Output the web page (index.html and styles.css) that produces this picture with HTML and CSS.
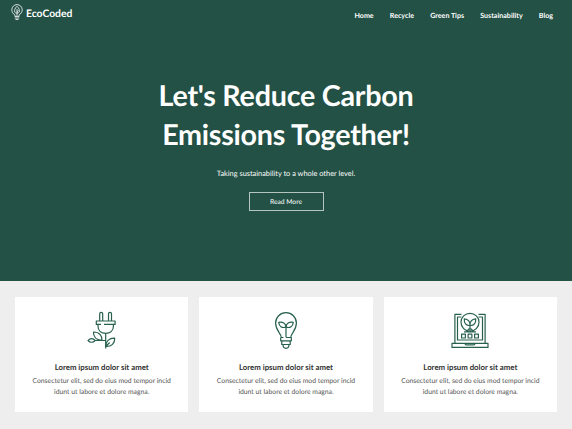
FILE: index.html
```html
<!DOCTYPE html>
<html lang="en">
<head>
<meta charset="utf-8">
<title>EcoCoded</title>
<link rel="stylesheet" href="styles.css">
</head>
<body>
<div class="top">
  <header class="bar">
    <a class="brand">
      <svg class="brand-icon" viewBox="0 0 12 17" width="12" height="17">
        <path d="M4 12.2V11C2 9.8.8 8 .8 5.8a5.2 5.2 0 0 1 10.4 0C11.2 8 10 9.8 8 11v1.2"/>
        <path d="M6 2.3C3.7 4.300 3.200 6.500 3.800 8.200 4.300 9.400 7.700 9.400 8.200 8.200 8.800 6.500 8.300 4.300 6 2.300ZM6 5v7M6 8l1.500-1.500M3.700 12.500h4.600M3.700 14h4.600M4.500 15.500h3"/>
      </svg>
      <span>EcoCoded</span>
    </a>
    <nav class="nav">
      <a>Home</a><a>Recycle</a><a>Green Tips</a><a>Sustainability</a><a>Blog</a>
    </nav>
  </header>
  <section class="hero">
    <h1>Let's Reduce Carbon<br>Emissions Together!</h1>
    <p>Taking sustainability to a whole other level.</p>
    <a class="button">Read More</a>
  </section>
</div>
<main class="cards">
  <article class="card">
    <svg class="icon" viewBox="0 0 44 50" width="44" height="50">
      <path d="M19.700 16V8.800a1.500 1.500 0 0 1 3 0V16M28.500 16V8.800a1.500 1.500 0 0 1 3 0V16"/>
      <path d="M21 19.400h-4.700V16h18.800v3.400H24M18 19.400v1.800c0 4.500 3.300 7.100 7.700 7.100s7.700-2.600 7.700-7.100v-1.800M25.700 28.300v15.100"/>
      <path d="M25.700 35.500h-10.500M22 35.500c.500-4.500-2.500-8.500-8.500-8.500-.300 4.500 2.700 8 8.500 8.500M15.200 35.500c-2.200-2.600-5.200-2.500-7.200 0 2 2.300 5 2.300 7.200 0M25.700 41.500c-.200-5 3.500-8.500 9-8.300.300 5-3.200 8.600-9 8.300l4-4"/>
    </svg>
    <h2>Lorem ipsum dolor sit amet</h2>
    <p>Consectetur elit, sed do eius mod tempor incid<br>idunt ut labore et dolore magna.</p>
  </article>
  <article class="card">
    <svg class="icon" viewBox="0 0 44 50" width="44" height="50">
      <path d="M17.200 32.300c0-4-5.600-6.400-5.600-14.200a10.400 10.400 0 0 1 20.800 0c0 7.800-5.600 10.200-5.600 14.200"/>
      <path d="M16.700 32.500h2.800M22 32.500h5.300v3.300H16.700v-3.300M17.800 36v3.500h8.400V36M19 39.800c0 4.700 6 4.700 6 0M22 32.300V20.500"/>
      <path d="M22 22c-4 1.500-7-.800-7.300-4.700 4-.800 7.300 1.200 7.300 4.700M22 22c4 1.500 7-.800 7.300-4.700-4-.800-7.300 1.200-7.300 4.700"/>
    </svg>
    <h2>Lorem ipsum dolor sit amet</h2>
    <p>Consectetur elit, sed do eius mod tempor incid<br>idunt ut labore et dolore magna.</p>
  </article>
  <article class="card">
    <svg class="icon" viewBox="0 0 44 50" width="44" height="50">
      <path d="M13.500 9.300H6.900v28.900M30.500 9.300h6.600v28.900M13.500 12H9.500v23h25V12h-4"/>
      <circle cx="22" cy="17.300" r="9"/>
      <path d="M22 26.300v-8M22 20.500c-4 .300-6-2.500-5.700-6.600 4 .300 6 2.800 5.700 6.600M22 20.500c4 .300 6-2.500 5.700-6.600-4 .300-6 2.800-5.700 6.600M19 26.800l1.500-2.800h3l1.500 2.800M16 26.800h12"/>
      <path d="M13.600 29.200h3.800v3.800h-3.800zM20.100 29.200h3.800v3.800h-3.800zM26.600 29.200h3.800v3.800h-3.800zM4 38.400h36v4H4zM16.500 38.400l1.500 1.500h8l1.500-1.500"/>
    </svg>
    <h2>Lorem ipsum dolor sit amet</h2>
    <p>Consectetur elit, sed do eius mod tempor incid<br>idunt ut labore et dolore magna.</p>
  </article>
</main>
</body>
</html>
```
FILE: styles.css
```css
* { box-sizing: border-box; }
body {
  margin: 0;
  height: 429px;
  overflow: hidden;
  background: #eee;
  font-family: Lato, sans-serif;
  text-rendering: geometricPrecision;
}
h1, h2, p { margin: 0; }
.top {
  height: 281px;
  background: #235145;
  color: #fff;
}
.bar {
  display: flex;
  justify-content: space-between;
  padding: 4px 19px 0 11px;
  height: 30px;
}
.brand {
  display: flex;
  gap: 3px;
  font-size: 10.300px;
  font-weight: 700;
  line-height: 20px;
}
.brand-icon {
  fill: none;
  stroke: #fff;
  stroke-width: .8;
}
.nav {
  display: flex;
  gap: 16.200px;
  font-size: 7.100px;
  font-weight: 700;
  line-height: 23px;
}
.hero {
  display: flex;
  flex-direction: column;
  align-items: center;
  padding-top: 47px;
  text-align: center;
}
.hero h1 {
  font-size: 28.700px;
  font-weight: 700;
  line-height: 39px;
  letter-spacing: -.25px;
}
.hero p {
  margin-top: 13px;
  font-size: 7.400px;
  line-height: 12px;
}
.button {
  width: 75px;
  height: 19px;
  margin-top: 12px;
  border: 1px solid #b4c4bf;
  font-size: 6.700px;
  line-height: 18px;
}
.cards {
  display: grid;
  grid-template-columns: repeat(3, 1fr);
  gap: 11px;
  padding: 16px 15px 0;
}
.card {
  height: 115px;
  padding-top: 8px;
  background: #fff;
  text-align: center;
}
.icon {
  display: block;
  margin: 0 auto;
  fill: none;
  stroke: #28604f;
  stroke-width: 1.200;
  stroke-linejoin: round;
}
.card h2 {
  margin-top: 6px;
  color: #333;
  font-size: 7.800px;
  font-weight: 700;
  line-height: 13px;
}
.card p {
  margin-top: 2px;
  color: #555;
  font-size: 6.800px;
  line-height: 11px;
}
```
